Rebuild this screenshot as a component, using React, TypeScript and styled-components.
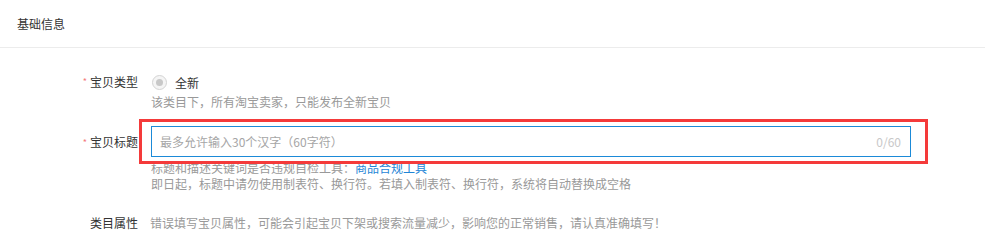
import React from "react";
import styled, { createGlobalStyle } from "styled-components";

const GlobalStyle = createGlobalStyle`
  body {
    margin: 0;
    background: #fff;
    font-family: "Noto Sans CJK SC", "Noto Sans", sans-serif;
    font-size: 12px;
    color: #333;
  }
`;

function App() {
  return (
    <Page>
      <GlobalStyle />
      <Header>基础信息</Header>
      <Form>
        <Row>
          <Label required>宝贝类型</Label>
          <Field>
            <RadioLine>
              <Radio />
              <span>全新</span>
            </RadioLine>
            <Help>该类目下，所有淘宝卖家，只能发布全新宝贝</Help>
          </Field>
        </Row>

        <Row top={16}>
          <Label required tall>
            宝贝标题
          </Label>
          <Field>
            <InputWrap>
              <Input placeholder="最多允许输入30个汉字（60字符）" />
              <Counter>0/60</Counter>
              <Highlight />
            </InputWrap>
            <HelpBlock>
              <Help>
                标题和描述关键词是否违规自检工具：<Link>商品合规工具</Link>
              </Help>
              <Help>
                即日起，标题中请勿使用制表符、换行符。若填入制表符、换行符，系统将自动替换成空格
              </Help>
            </HelpBlock>
          </Field>
        </Row>

        <Row top={22}>
          <Label>类目属性</Label>
          <Field>
            <InlineHelp>
              错误填写宝贝属性，可能会引起宝贝下架或搜索流量减少，影响您的正常销售，请认真准确填写！
            </InlineHelp>
          </Field>
        </Row>
      </Form>
    </Page>
  );
}

const Page = styled.div`
  width: 985px;
  height: 232px;
  overflow: hidden;
`;

const Header = styled.div`
  height: 47px;
  line-height: 47px;
  padding-left: 17px;
  border-bottom: 1px solid #ececec;
  color: #333;
`;

const Form = styled.div`
  padding-top: 25px;
`;

const Row = styled.div<{ top?: number }>`
  display: flex;
  flex-direction: row;
  align-items: flex-start;
  margin-top: ${(p) => p.top || 0}px;
`;

const Label = styled.div<{ required?: boolean; tall?: boolean }>`
  width: 138px;
  flex-shrink: 0;
  text-align: right;
  line-height: ${(p) => (p.tall ? "31px" : "18px")};
  color: #333;

  &::before {
    content: ${(p) => (p.required ? '"*"' : "none")};
    color: #f47a7a;
    font-size: 9px;
    margin-right: 3px;
    vertical-align: top;
    position: relative;
    top: ${(p) => (p.tall ? "1px" : "0px")};
  }
`;

const Field = styled.div`
  margin-left: 13px;
  display: flex;
  flex-direction: column;
`;

const RadioLine = styled.div`
  display: flex;
  align-items: center;
  height: 18px;
  margin-left: 1px;
  gap: 8px;
`;

const Radio = styled.span`
  width: 13px;
  height: 13px;
  border: 1px solid #d4d4d4;
  border-radius: 50%;
  background: #f5f5f5;
  display: flex;
  align-items: center;
  justify-content: center;

  &::after {
    content: "";
    width: 7px;
    height: 7px;
    border-radius: 50%;
    background: #c8c8c8;
  }
`;

const Help = styled.div`
  color: #999;
  line-height: 16px;
  margin-top: 3px;

  & + & {
    margin-top: 0;
  }
`;

const HelpBlock = styled.div`
  margin-top: 0;
`;

const InlineHelp = styled.div`
  color: #999;
  line-height: 18px;
  margin-left: -1px;
`;

const Link = styled.a`
  color: #1f86d6;
  cursor: pointer;
`;

const InputWrap = styled.div`
  position: relative;
  width: 760px;
  height: 31px;
`;

const Input = styled.input`
  box-sizing: border-box;
  width: 100%;
  height: 31px;
  border: 1px solid #1b8ad8;
  outline: none;
  padding: 0 50px 0 8px;
  font-family: inherit;
  font-size: 12px;
  color: #333;

  &::placeholder {
    color: #a6a6a6;
  }
`;

const Counter = styled.span`
  position: absolute;
  right: 10px;
  top: 0;
  line-height: 31px;
  color: #c8c8c8;
  font-size: 12px;
`;

const Highlight = styled.div`
  position: absolute;
  left: -12px;
  right: -17px;
  top: -7px;
  bottom: -7px;
  border: 3.5px solid #f43a3a;
  pointer-events: none;
`;

export default App;
